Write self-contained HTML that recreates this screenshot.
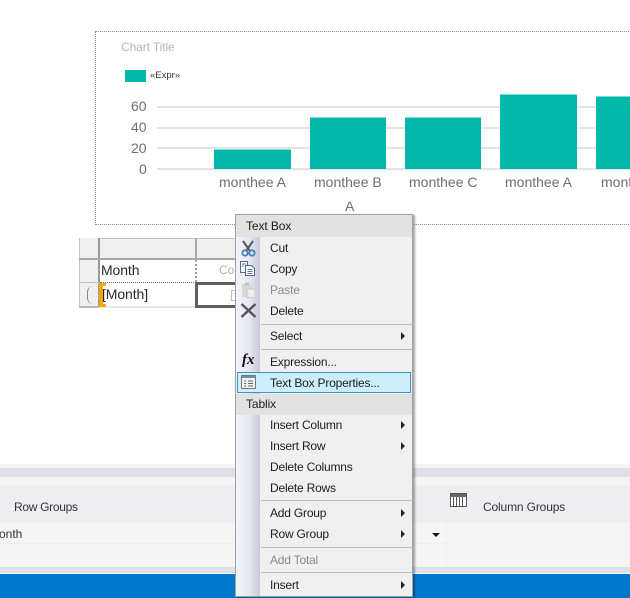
<!DOCTYPE html>
<html><head><meta charset="utf-8"><style>
html,body{margin:0;padding:0;background:#fff}
#p{position:relative;width:630px;height:598px;overflow:hidden;background:#fff;font-family:"Liberation Sans",sans-serif;color:#1e1e1e}
#p div,#p span.a{position:absolute}
.t{white-space:nowrap}
.ln{height:2px;background:#e3e3e3;left:157px;width:473px}
.bar{background:#00b8aa;border-top:1px solid #7fdcd4;box-sizing:border-box}
.ax{font-size:14px;color:#6f6f6f;white-space:nowrap}
.m{font-size:12px;left:34px;white-space:nowrap;color:#1c1c1c;line-height:16px;letter-spacing:-.2px}
.d{color:#8a8a8a}
.s{left:25px;width:152px;height:1px;background:#b9b9c6}
.ar{left:165px;width:0;height:0;border-left:4px solid #222;border-top:4px solid transparent;border-bottom:4px solid transparent}
</style></head><body><div id="p">
<div style="left:95px;top:31px;width:600px;height:192px;border:1px dotted #8c8c8c"></div>
<div class="t" style="left:121px;top:40px;font-size:12px;letter-spacing:-.1px;color:#b5b5b5">Chart Title</div>
<div style="left:125px;top:70px;width:21px;height:12px;background:#00b8aa"></div>
<div class="t" style="left:150px;top:70px;font-size:9.5px;color:#333">«Expr»</div>
<div class="ln" style="top:106px"></div><div class="ln" style="top:127px"></div><div class="ln" style="top:147px"></div><div class="ln" style="top:168px"></div>
<div class="ax" style="left:131px;top:98px">60</div>
<div class="ax" style="left:131px;top:119px">40</div>
<div class="ax" style="left:131px;top:140px">20</div>
<div class="ax" style="left:139px;top:161px">0</div>
<div class="bar" style="left:214px;top:149px;width:77px;height:20px"></div>
<div class="bar" style="left:310px;top:117px;width:76px;height:52px"></div>
<div class="bar" style="left:405px;top:117px;width:76px;height:52px"></div>
<div class="bar" style="left:500px;top:94px;width:77px;height:75px"></div>
<div class="bar" style="left:596px;top:96px;width:40px;height:73px"></div>
<div class="ax" style="left:219px;top:174px">monthee A</div>
<div class="ax" style="left:314px;top:174px">monthee B</div>
<div class="ax" style="left:409px;top:174px">monthee C</div>
<div class="ax" style="left:505px;top:174px">monthee A</div>
<div class="ax" style="left:601px;top:174px">monthee B</div>
<div class="ax" style="left:345px;top:198px">A</div>

<!-- tablix -->
<div style="left:79px;top:238px;width:170px;height:21px;background:#f0f0f0;border-top:1px solid #c4c4c4;box-sizing:border-box"></div>
<div style="left:79px;top:238px;width:20px;height:70px;background:#f0f0f0"></div>
<div style="left:79px;top:238px;width:1px;height:70px;background:#c4c4c4"></div>
<div style="left:98px;top:238px;width:2px;height:70px;background:#9a9a9a"></div>
<div style="left:79px;top:258px;width:170px;height:2px;background:#a8a8a8"></div>
<div style="left:79px;top:282px;width:20px;height:1px;background:#c0c0c0"></div>
<div style="left:195px;top:238px;width:2px;height:21px;background:#a8a8a8"></div>
<div style="left:99px;top:306px;width:100px;height:2px;background:#e6e6e6"></div>
<div style="left:79px;top:306px;width:20px;height:2px;background:#b8b8b8"></div>
<div style="left:195px;top:260px;width:0;height:22px;border-left:2px dotted #a0a0a0"></div>
<div style="left:100px;top:282px;width:140px;height:0;border-top:1px dotted #707070"></div>
<div class="t" style="left:101px;top:262px;font-size:14px;letter-spacing:-.1px;color:#2a2a2a">Month</div>
<div class="t" style="left:219px;top:263px;font-size:12px;color:#b0b0b0">Col</div>
<div style="left:99px;top:283px;width:7px;height:24px;background:#f5a70a"></div>
<div style="left:103px;top:286px;width:3px;height:18px;background:#fff"></div>
<div class="t" style="left:102px;top:286px;font-size:14px;letter-spacing:-.1px;color:#2a2a2a">[Month]</div>
<div style="left:87px;top:286px;width:6px;height:18px;border-left:1px solid #888;border-radius:6px 0 0 6px"></div>
<div style="left:195px;top:282px;width:60px;height:26px;border:3px solid #606060;box-sizing:border-box"></div>
<div style="left:231px;top:290px;width:6px;height:9px;border:1px solid #bbb"></div>

<!-- bottom -->
<div style="left:0;top:464px;width:630px;height:4px;background:#f5f5f5"></div>
<div style="left:0;top:468px;width:630px;height:9px;background:#dfdfe8"></div>
<div style="left:0;top:477px;width:630px;height:9px;background:#f5f5f5"></div>
<div style="left:0;top:486px;width:630px;height:37px;background:#eeeef2"></div>
<div style="left:0;top:523px;width:630px;height:44px;background:#f5f5f5"></div>
<div style="left:0;top:543px;width:446px;height:1px;background:#eeeef2"></div>
<div style="left:446px;top:523px;width:1px;height:44px;background:#eeeef2"></div>
<div style="left:0;top:567px;width:630px;height:6px;background:#dfdfe8"></div>
<div style="left:0;top:574px;width:630px;height:24px;background:#007acc"></div>
<div class="t" style="left:14px;top:500px;font-size:12px;letter-spacing:-.3px;color:#333">Row Groups</div>
<div class="t" style="left:-11px;top:527px;font-size:12px;color:#333">Month</div>
<div class="t" style="left:483px;top:500px;font-size:12px;letter-spacing:-.15px;color:#333">Column Groups</div>
<svg class="a" style="position:absolute;left:450px;top:493px" width="18" height="15" viewBox="0 0 18 15"><rect x=".5" y=".5" width="16" height="13" fill="#fff" stroke="#555"/><rect x="1" y="1" width="15" height="3" fill="#666"/><path d="M3.5 4v10M6.5 4v10M9.5 4v10M12.5 4v10" stroke="#555"/></svg>
<div style="left:432px;top:533px;width:0;height:0;border-top:4px solid #111;border-left:4px solid transparent;border-right:4px solid transparent"></div>

<!-- menu -->
<div id="menu" style="left:235px;top:214px;width:178px;height:383px;background:#f0f0f0;border:1px solid #a0a0a0;box-sizing:border-box;box-shadow:2px 1px 2px rgba(0,0,0,.35)">
<div style="left:0;top:0;width:176px;height:22px;background:#e2e2e2"></div>
<div style="left:0;top:22px;width:24px;height:359px;background:linear-gradient(90deg,#f4f4fa,#e6e7f3 55%,#c7c9da)"></div>
<div class="t" style="left:10px;top:4px;font-size:12px;letter-spacing:-.1px;color:#1c1c1c">Text Box</div>
<div class="m" style="top:25px">Cut</div>
<div class="m" style="top:46px">Copy</div>
<div class="m d" style="top:67px">Paste</div>
<div class="m" style="top:88px">Delete</div>
<div class="s" style="top:109px"></div>
<div class="m" style="top:113px">Select</div><div class="ar" style="top:117px"></div>
<div class="s" style="top:134px"></div>
<div class="m" style="top:139px">Expression...</div>
<div style="left:1px;top:157px;width:174px;height:21px;background:#cdeefb;border:1px solid #3d94c4;box-sizing:border-box"></div>
<div class="m" style="top:160px">Text Box Properties...</div>
<div style="left:0;top:179px;width:176px;height:21px;background:#e2e2e2"></div>
<div class="t" style="left:10px;top:182px;font-size:12px;letter-spacing:-.1px;color:#1c1c1c">Tablix</div>
<div class="m" style="top:202px">Insert Column</div><div class="ar" style="top:206px"></div>
<div class="m" style="top:223px">Insert Row</div><div class="ar" style="top:227px"></div>
<div class="m" style="top:244px">Delete Columns</div>
<div class="m" style="top:265px">Delete Rows</div>
<div class="s" style="top:285px"></div>
<div class="m" style="top:290px">Add Group</div><div class="ar" style="top:294px"></div>
<div class="m" style="top:311px">Row Group</div><div class="ar" style="top:315px"></div>
<div class="s" style="top:332px"></div>
<div class="m d" style="top:337px">Add Total</div>
<div class="s" style="top:357px"></div>
<div class="m" style="top:362px">Insert</div><div class="ar" style="top:366px"></div>

<svg style="position:absolute;left:4px;top:25px" width="18" height="18" viewBox="0 0 18 18"><path d="M3 1l7 10M13 1L6 11" stroke="#5a5a5a" stroke-width="2" fill="none"/><circle cx="5" cy="13" r="2.700" fill="none" stroke="#4a7fb5" stroke-width="1.800"/><circle cx="12" cy="13" r="2.700" fill="none" stroke="#4a7fb5" stroke-width="1.800"/></svg>
<svg style="position:absolute;left:3px;top:45px" width="18" height="18" viewBox="0 0 18 18"><path d="M1.500 1.500h7v11h-7z" fill="#fff" stroke="#5a6a7a"/><path d="M6.500 5.500h6l3 3v7h-9z" fill="#fff" stroke="#5a6a7a"/><path d="M8.500 9.500h5M8.500 11.500h5M8.500 13.500h5M3 4h4M3 6h2" stroke="#4a7fb5"/></svg>
<svg style="position:absolute;left:4px;top:66px" width="18" height="18" viewBox="0 0 18 18"><path d="M2 3h10v13H2z" fill="#d8d8d8"/><path d="M5 1.500h4v3H5z" fill="#c0c0c0"/><path d="M7 8h8v8.500H7z" fill="#ececec" stroke="#ccc"/></svg>
<svg style="position:absolute;left:4px;top:87px" width="17" height="17" viewBox="0 0 17 17"><path d="M1.500 2l14 13M15.500 2l-14 13" stroke="#555" stroke-width="2.400"/></svg>
<div class="t" style="left:6px;top:137px;font:italic bold 15px 'Liberation Serif',serif;color:#111">fx</div>
<svg style="position:absolute;left:5px;top:160px" width="17" height="16" viewBox="0 0 17 16"><rect x=".5" y=".5" width="14" height="13" fill="#f4f4f4" stroke="#7a7a7a"/><rect x="1" y="1" width="13" height="2" fill="#6d8fb0"/><path d="M3 6h2M3 8.500h2M3 11h2M7 6h5M7 8.500h5M7 11h5" stroke="#666"/></svg>
</div>
</div></body></html>
